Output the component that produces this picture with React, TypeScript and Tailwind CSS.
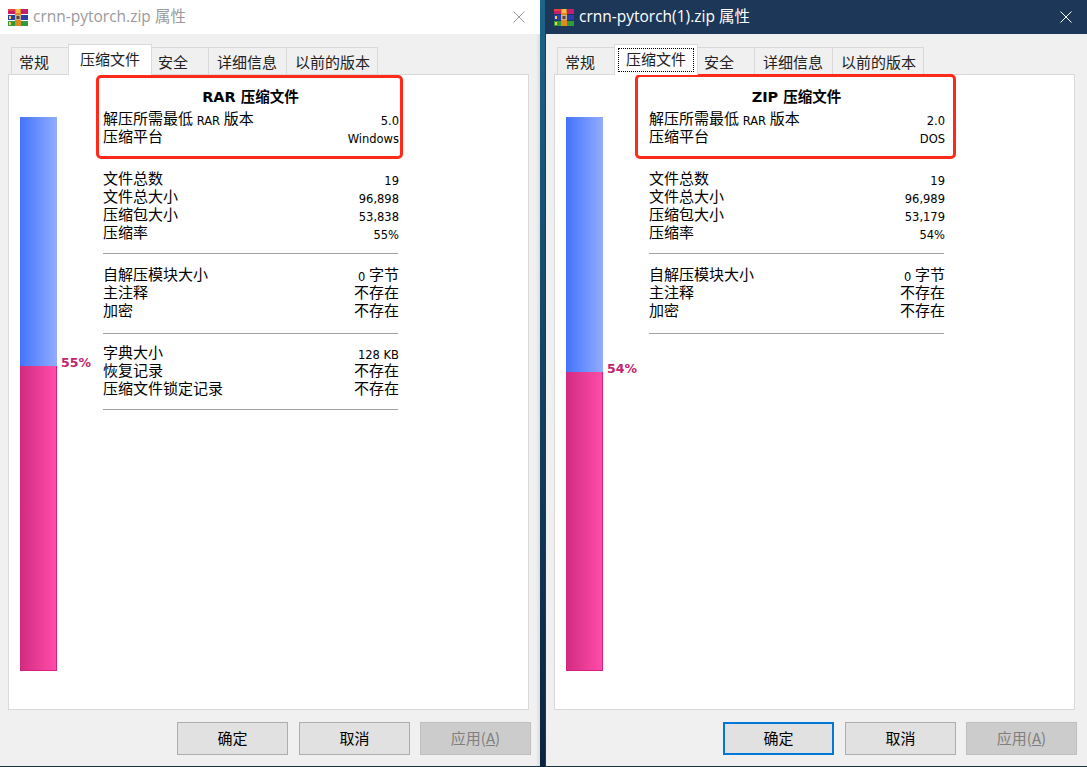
const cjk = "font-['DejaVu_Sans','Noto_Sans_CJK_SC',sans-serif]"

type Row = [string, string]

interface ArchiveInfo {
  title: string
  active: boolean
  heading: string
  version: string
  platform: string
  stats: Row[]
  sfx: Row[]
  extra?: Row[]
  ratio: string
  blueHeight: number
  boxClass: string
}

const left: ArchiveInfo = {
  title: 'crnn-pytorch.zip 属性',
  active: false,
  heading: 'RAR 压缩文件',
  version: '5.0',
  platform: 'Windows',
  stats: [
    ['文件总数', '19'],
    ['文件总大小', '96,898'],
    ['压缩包大小', '53,838'],
    ['压缩率', '55%'],
  ],
  sfx: [
    ['自解压模块大小', '0 字节'],
    ['主注释', '不存在'],
    ['加密', '不存在'],
  ],
  extra: [
    ['字典大小', '128 KB'],
    ['恢复记录', '不存在'],
    ['压缩文件锁定记录', '不存在'],
  ],
  ratio: '55%',
  blueHeight: 249,
  boxClass: 'left-[87px] top-[0px] w-[307px] h-[84px]',
}

const right: ArchiveInfo = {
  title: 'crnn-pytorch(1).zip 属性',
  active: true,
  heading: 'ZIP 压缩文件',
  version: '2.0',
  platform: 'DOS',
  stats: [
    ['文件总数', '19'],
    ['文件总大小', '96,989'],
    ['压缩包大小', '53,179'],
    ['压缩率', '54%'],
  ],
  sfx: [
    ['自解压模块大小', '0 字节'],
    ['主注释', '不存在'],
    ['加密', '不存在'],
  ],
  ratio: '54%',
  blueHeight: 255,
  boxClass: 'left-[80px] top-[-1px] w-[321px] h-[85px]',
}

function RarIcon() {
  return (
    <svg width="20" height="17" viewBox="0 0 20 17" className="shrink-0">
      <rect x="0" y="0" width="20" height="5" fill="#c2206e" />
      <rect x="0" y="0" width="7" height="2" fill="#e8413c" />
      <rect x="0" y="6" width="20" height="5" fill="#2c3fa8" />
      <rect x="1" y="7" width="2" height="3" fill="#f4d03f" />
      <rect x="0" y="12" width="20" height="5" fill="#2f9a3f" />
      <rect x="1" y="13" width="2" height="3" fill="#f4d03f" />
      <rect x="7" y="0" width="6" height="17" fill="#e08a1e" />
      <rect x="8" y="0" width="4" height="4" fill="#f2c14e" />
      <rect x="7" y="6" width="6" height="5" fill="#c9b08a" />
      <rect x="8.5" y="7" width="3" height="3" fill="#5a4632" />
    </svg>
  )
}

function Tabs({ active }: { active: boolean }) {
  const tab = 'h-[27px] border border-b-0 border-[#d9d9d9] -ml-px flex items-center text-[15px] text-[#222] pt-[3px]'
  return (
    <div className="flex items-end h-[30px] mt-[10px] pl-[12px] relative z-10 font-['Noto_Sans_CJK_SC',sans-serif]">
      <div className={`${tab} w-[58px] pl-[7px]`}>常规</div>
      <div className="h-[31px] w-[84px] -ml-px -mb-px bg-white border border-b-0 border-[#d9d9d9] flex items-center justify-center text-[15px] text-[#222] pb-[1px]">
        {active ? (
          <span className="w-[76px] h-[24px] border border-dotted border-black flex items-center justify-center">压缩文件</span>
        ) : (
          '压缩文件'
        )}
      </div>
      <div className={`${tab} w-[58px] pl-[6px]`}>安全</div>
      <div className={`${tab} w-[79px] pl-[8px]`}>详细信息</div>
      <div className={`${tab} w-[92px] pl-[8px]`}>以前的版本</div>
    </div>
  )
}

// 숫자/영문은 작은 글자로, 한자는 그대로
function Mixed({ text }: { text: string }) {
  const parts = text.split(/([\d,.%A-Za-z ]+)/).filter(Boolean)
  return (
    <>
      {parts.map((p, i) =>
        /^[\d,.%A-Za-z ]+$/.test(p) ? (
          <span key={i} className="text-[11.5px] text-black relative top-[1px]">{p}</span>
        ) : (
          <span key={i}>{p}</span>
        ),
      )}
    </>
  )
}

function InfoRow({ row }: { row: Row }) {
  return (
    <div className="flex justify-between h-[18px] leading-[18px] pt-px text-[15px] text-black">
      <span className="whitespace-pre"><Mixed text={row[0]} /></span>
      <span className="whitespace-pre"><Mixed text={row[1]} /></span>
    </div>
  )
}

function Bar({ info }: { info: ArchiveInfo }) {
  return (
    <div className="relative mt-[42px] ml-[11px] w-[37px] h-[554px] shrink-0 flex flex-col">
      <div
        className="bg-gradient-to-r from-[#4472fb] to-[#92acff]"
        style={{ height: info.blueHeight }}
      />
      <div className="flex-1 bg-gradient-to-r from-[#d22a80] to-[#ff4caa] border-r border-b border-[#d81f7f]" />
      <span
        className="absolute left-[41px] text-[12.5px] font-bold text-[#c2256f] font-['DejaVu_Sans',sans-serif] leading-[18px]"
        style={{ top: info.blueHeight - 12 }}
      >
        {info.ratio}
      </span>
    </div>
  )
}

function Details({ info }: { info: ArchiveInfo }) {
  return (
    <div className={`ml-[46px] mt-[12px] w-[296px] ${cjk}`}>
      <div className="text-center h-[18px] leading-[18px] pt-px text-[14.5px] font-bold text-black pr-[1px]">{info.heading}</div>
      <div className="mt-[4px]">
        <InfoRow row={['解压所需最低 RAR 版本', info.version]} />
        <InfoRow row={['压缩平台', info.platform]} />
      </div>
      <div className="mt-[24px]">
        {info.stats.map((r) => (
          <InfoRow key={r[0]} row={r} />
        ))}
      </div>
      <div className="mt-[12px] h-px w-[295px] bg-[#a0a0a0]" />
      <div className="mt-[11px]">
        {info.sfx.map((r) => (
          <InfoRow key={r[0]} row={r} />
        ))}
      </div>
      <div className="mt-[14px] h-px w-[295px] bg-[#a0a0a0]" />
      {info.extra && (
        <>
          <div className="mt-[9px]">
            {info.extra.map((r) => (
              <InfoRow key={r[0]} row={r} />
            ))}
          </div>
          <div className="mt-[12px] h-px w-[295px] bg-[#a0a0a0]" />
        </>
      )}
    </div>
  )
}

function Buttons({ active }: { active: boolean }) {
  const btn = 'w-[111px] h-[33px] flex items-center justify-center text-[15px]'
  return (
    <div className="flex ml-[177px] mt-[12px] font-['Noto_Sans_CJK_SC',sans-serif]">
      <div className={`${btn} bg-[#e1e1e1] text-black ${active ? 'border-2 border-[#0078d7]' : 'border border-[#adadad]'}`}>确定</div>
      <div className={`${btn} ml-[11px] bg-[#e1e1e1] text-black border border-[#adadad]`}>取消</div>
      <div className={`${btn} ml-[10px] bg-[#cccccc] text-[#7f7f7f] border border-[#bfbfbf]`}>
        应用(<span className="underline">A</span>)
      </div>
    </div>
  )
}

function Dialog({ info }: { info: ArchiveInfo }) {
  return (
    <div className="flex-1 h-[766px] bg-[#f0f0f0]">
      <div className={`h-[34px] flex items-center pl-[8px] ${info.active ? 'bg-[#1d3759] text-white' : 'bg-white text-[#9a9a9a]'}`}>
        <RarIcon />
        <span className="ml-[5px] text-[15.5px] font-['Open_Sans','Noto_Sans_CJK_SC',sans-serif] whitespace-nowrap">{info.title}</span>
        <svg width="12" height="12" viewBox="0 0 12 12" className="ml-auto mr-[15px] shrink-0" stroke="currentColor" fill="none">
          <path d="M0.5 0.5L11.5 11.5M11.5 0.5L0.5 11.5" strokeWidth="1" />
        </svg>
      </div>
      <Tabs active={info.active} />
      <div className="relative ml-[8px] w-[521px] h-[636px] bg-white border border-[#d9d9d9] flex items-start">
        <Bar info={info} />
        <Details info={info} />
        <div className={`absolute rounded-[5px] border-[3px] border-[#ff2a1a] ${info.boxClass}`} />
      </div>
      <Buttons active={info.active} />
    </div>
  )
}

export default function App() {
  return (
    <div className="w-[1087px] h-[767px] overflow-hidden bg-[#1c2f45] flex">
      <div className="w-[540px] relative">
        <Dialog info={left} />
        <div className="absolute right-0 top-[34px] bottom-px w-[4px] bg-gradient-to-r from-[#f0f0f0] to-[#dcdcdc]" />
      </div>
      <div className="w-[5px] h-full bg-gradient-to-b from-[#1c6488] to-[#0c2340]" />
      <div className="w-[542px] border-l border-[#1d3759]">
        <Dialog info={right} />
      </div>
    </div>
  )
}
